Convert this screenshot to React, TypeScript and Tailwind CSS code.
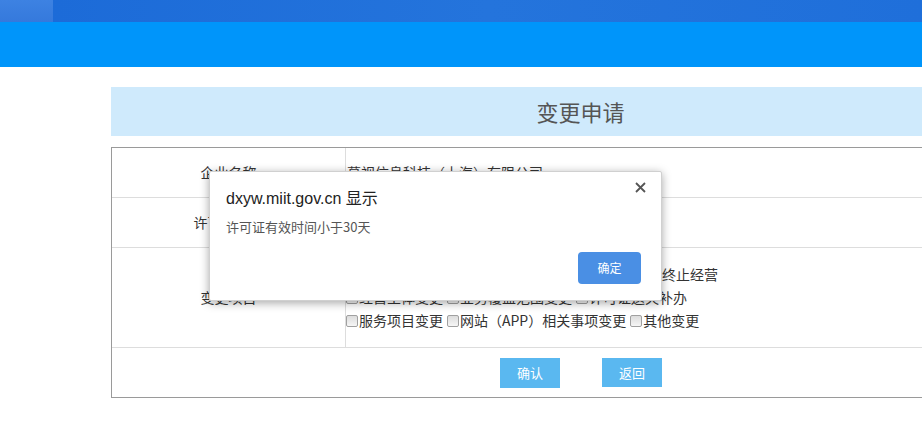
import React from 'react';

const cjk = { fontFamily: '"Noto Sans CJK SC", "Liberation Sans", sans-serif' };

// Old-style grey checkbox
function Box() {
  return (
    <span className="inline-block w-[12px] h-[12px] mr-[1px] align-[-1px] rounded-[2px] border border-[#a0a0a0] bg-gradient-to-b from-[#dcdcdc] to-[#f6f6f6]" />
  );
}

function Item({ label }: { label: string }) {
  return (
    <span className="mr-[4px] whitespace-nowrap">
      <Box />
      {label}
    </span>
  );
}

const changeLines = [
  ['公司名称变更', '法定代表人变更', '注册地变更', '终止经营'],
  ['经营主体变更', '业务覆盖范围变更', '许可证遗失补办'],
  ['服务项目变更', '网站（APP）相关事项变更', '其他变更'],
];

export default function App() {
  return (
    <div className="relative w-[922px] h-[431px] overflow-hidden bg-white text-[#333]" style={cjk}>
      {/* top banner */}
      <div className="flex h-[22px]">
        <div className="w-[53px] bg-gradient-to-b from-[#3d82e2] to-[#3579dc]" />
        <div className="flex-1 bg-gradient-to-r from-[#1c6bd8] via-[#2474dc] to-[#1f6fda]" />
      </div>
      <div className="h-[45px] bg-[#0095fa]" />

      {/* content */}
      <div className="pl-[111px] pt-[20px]">
        <div className="h-[49px] bg-[#cfeafc] flex items-center justify-center text-[22px] text-[#555] pl-[128px]">
          变更申请
        </div>

        <div className="mt-[11px] border border-r-0 border-[#9a9a9a] text-[14px]">
          <div className="grid grid-cols-[234px_1fr] h-[50px] border-b border-[#ddd]">
            <div className="flex items-center justify-center border-r border-[#ddd]">企业名称</div>
            <div className="flex items-center pl-[1px]">慕视信息科技（上海）有限公司</div>
          </div>
          <div className="grid grid-cols-[234px_1fr] h-[50px] border-b border-[#ddd]">
            <div className="flex items-center justify-center border-r border-[#ddd]">许可证编号</div>
            <div className="flex items-center pl-[1px]">沪B2-20180356</div>
          </div>
          <div className="grid grid-cols-[234px_1fr] h-[100px] border-b border-[#ddd]">
            <div className="flex items-center justify-center border-r border-[#ddd]">变更项目</div>
            <div className="flex flex-col justify-center leading-[23px]">
              {changeLines.map((line, i) => (
                <div key={i} className="whitespace-nowrap">
                  {line.map((l) => (
                    <Item key={l} label={l} />
                  ))}
                </div>
              ))}
            </div>
          </div>
          <div className="flex items-center h-[49px] pl-[388px] gap-[42px] text-[13px] text-white">
            <button className="w-[60px] h-[30px] bg-[#5ab8f0]">确认</button>
            <button className="w-[60px] h-[29px] bg-[#5ab8f0]">返回</button>
          </div>
        </div>
      </div>

      {/* alert dialog */}
      <div className="absolute left-[209px] top-[171px] w-[453px] h-[130px] bg-white rounded-[2px] border border-[#d0d0d0] shadow-[0_2px_10px_rgba(0,0,0,0.35)] pl-[16px] pr-[20px] pt-[16px]">
        <svg width="11" height="11" viewBox="0 0 11 11" className="absolute top-[10px] right-[15px]">
          <path d="M1 1L10 10M10 1L1 10" stroke="#555" strokeWidth="1.8" />
        </svg>
        <div
          className="text-[16px] text-[#222] leading-[22px]"
          style={{ fontFamily: '"Liberation Sans", "Noto Sans CJK SC", sans-serif' }}
        >
          dxyw.miit.gov.cn 显示
        </div>
        <div className="mt-[8px] text-[13px] text-[#555] leading-[18px]">许可证有效时间小于30天</div>
        <div className="flex justify-end mt-[16px]">
          <button className="w-[63px] h-[32px] rounded-[4px] bg-[#4a8fe4] text-white text-[12px]">确定</button>
        </div>
      </div>
    </div>
  );
}
